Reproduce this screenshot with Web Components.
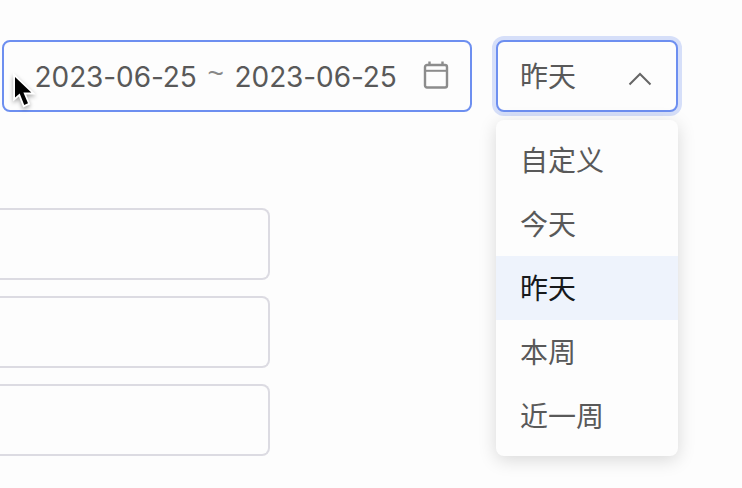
<!DOCTYPE html>
<html lang="zh-CN">
<head>
<meta charset="UTF-8">
<title>日期筛选</title>
<style>
  body {
    margin: 0;
    height: 488px;
    overflow: hidden;
    position: relative;
    background: #fdfdfd;
    color: #595959;
    font-family: Inter, "Noto Sans CJK SC", sans-serif;
    font-size: 28px;
  }
  .filtros {
    display: flex;
    gap: 24px;
    padding: 40px 0 0 2px;
  }
  .campos {
    display: flex;
    flex-direction: column;
    gap: 16px;
    width: 270px;
    margin-top: 96px;
  }
</style>
</head>
<body>
  <div class="filtros">
    <date-range start="2023-06-25" end="2023-06-25"></date-range>
    <select-box value="昨天">
      <select-option>自定义</select-option>
      <select-option>今天</select-option>
      <select-option selected>昨天</select-option>
      <select-option>本周</select-option>
      <select-option>近一周</select-option>
    </select-box>
  </div>
  <div class="campos">
    <text-field></text-field>
    <text-field></text-field>
    <text-field></text-field>
  </div>
  <water-mark></water-mark>
  <mouse-pointer></mouse-pointer>

  <script>
    // Date range input
    class DateRange extends HTMLElement {
      constructor() {
        super();
        this.attachShadow({ mode: 'open' });
      }

      connectedCallback() {
        this.shadowRoot.innerHTML = `
          <style>
            :host {
              display: flex;
              align-items: center;
              box-sizing: border-box;
              width: 470px;
              height: 72px;
              padding: 0 21px 0 30.6px;
              border: 2px solid #6d8ff0;
              border-radius: 8px;
            }
            .date {
              width: 162px;
              padding-top: 1px;
              letter-spacing: -0.1px;
              white-space: nowrap;
            }
            .sep {
              width: 38px;
              text-align: center;
              font-family: "Liberation Sans", sans-serif;
              font-size: 28px;
              line-height: 32px;
              padding-bottom: 5px;
              color: #888;
            }
            svg { margin-left: auto; display: block; }
          </style>
          <span class="date">${this.getAttribute('start')}</span>
          <span class="sep">~</span>
          <span class="date">${this.getAttribute('end')}</span>
          <svg width="26" height="30" viewBox="0 0 26 30" fill="none" stroke="#8c8c8c">
            <rect x="2" y="4" width="22" height="22.5" rx="2" stroke-width="2.4"/>
            <path d="M2 9.8H24" stroke-width="2"/>
            <path d="M6.5 0.5V5M19.5 0.5V5" stroke-width="2.4"/>
          </svg>
        `;
      }
    }

    // Open select with its menu
    class SelectBox extends HTMLElement {
      constructor() {
        super();
        this.attachShadow({ mode: 'open' });
      }

      connectedCallback() {
        this.shadowRoot.innerHTML = `
          <style>
            :host {
              display: block;
              position: relative;
              width: 182px;
            }
            .box {
              display: flex;
              align-items: center;
              justify-content: space-between;
              box-sizing: border-box;
              height: 72px;
              padding: 0 24px 0 22px;
              border: 2px solid #6d8ff0;
              border-radius: 8px;
              background: #fdfdfd;
              box-shadow: 0 0 0 4px #d6dff9;
            }
            .box span { padding-bottom: 2px; }
            .menu {
              position: absolute;
              top: 80px;
              left: 0;
              right: 0;
              padding: 8px 0;
              border-radius: 8px;
              background: #fdfdfd;
              box-shadow: 0 4px 18px rgba(0, 0, 0, 0.15);
            }
            svg { display: block; margin-top: 6px; }
          </style>
          <div class="menu"><slot></slot></div>
          <div class="box">
            <span>${this.getAttribute('value')}</span>
            <svg width="24" height="14" viewBox="0 0 24 14" fill="none" stroke="#666" stroke-width="2">
              <path d="M1.5 12.5L12 2L22.5 12.5"/>
            </svg>
          </div>
        `;
      }
    }

    class SelectOption extends HTMLElement {
      constructor() {
        super();
        this.attachShadow({ mode: 'open' });
        this.shadowRoot.innerHTML = `
          <style>
            :host {
              display: block;
              box-sizing: border-box;
              height: 64px;
              line-height: 62px;
              padding: 2px 0 0 24px;
            }
            :host([selected]) {
              background: #eef3fc;
              color: #17191c;
            }
          </style>
          <slot></slot>
        `;
      }
    }

    // Empty field, open on the left side
    class TextField extends HTMLElement {
      constructor() {
        super();
        this.attachShadow({ mode: 'open' });
        this.shadowRoot.innerHTML = `
          <style>
            :host {
              display: block;
              box-sizing: border-box;
              height: 72px;
              border: 2px solid #dcdbe2;
              border-left: 0;
              border-radius: 0 8px 8px 0;
            }
          </style>
        `;
      }
    }

    // Diagonal watermark, repeated every 342 x 80
    class WaterMark extends HTMLElement {
      constructor() {
        super();
        this.attachShadow({ mode: 'open' });
      }

      connectedCallback() {
        let marks = '';
        for (let x = -104; x < 742; x += 342) {
          for (let y = -90; y < 500; y += 80) {
            marks += `
              <g transform="translate(${x} ${y}) rotate(45)">
                <text x="0" y="-22" textLength="158">fengbaiyang -</text>
                <text x="0" y="8" textLength="238">2023/06/26 21:13:44</text>
              </g>`;
          }
        }
        this.shadowRoot.innerHTML = `
          <style>
            :host {
              display: block;
              position: absolute;
              inset: 0;
              pointer-events: none;
            }
            text {
              font: 400 24px "Open Sans", "Noto Sans", sans-serif;
              fill: rgba(0, 0, 0, 0.02);
            }
          </style>
          <svg width="742" height="488" aria-hidden="true">${marks}</svg>
        `;
      }
    }

    class MousePointer extends HTMLElement {
      constructor() {
        super();
        this.attachShadow({ mode: 'open' });
        this.shadowRoot.innerHTML = `
          <style>
            :host {
              display: block;
              position: absolute;
              left: 10px;
              top: 70px;
            }
            svg {
              display: block;
              filter: drop-shadow(0 2px 2px rgba(0, 0, 0, 0.35));
            }
          </style>
          <svg width="28" height="42" viewBox="0 0 28 42">
            <path d="M5 7V27.5L9.7 23.5L14.2 35L18 33.3L13.4 22.6H21.3Z" fill="#000" stroke="#fff" stroke-width="3.6" paint-order="stroke"/>
          </svg>
        `;
      }
    }

    customElements.define('date-range', DateRange);
    customElements.define('select-box', SelectBox);
    customElements.define('select-option', SelectOption);
    customElements.define('text-field', TextField);
    customElements.define('water-mark', WaterMark);
    customElements.define('mouse-pointer', MousePointer);
  </script>
</body>
</html>
